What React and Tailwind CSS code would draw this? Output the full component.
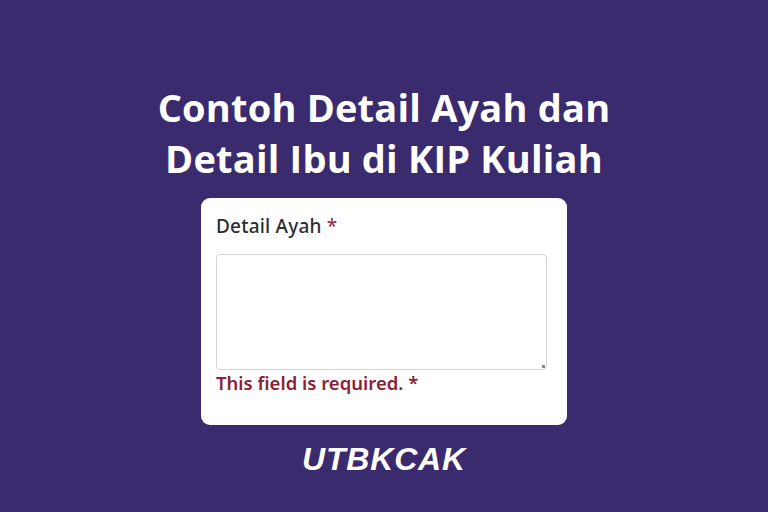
export default function App() {
  return (
    <div className="w-[768px] h-[512px] bg-[#3a2a6e] flex flex-col items-center pt-[82px] font-['Open_Sans',sans-serif]">
      <h1 className="text-white text-[38px] leading-[51px] font-bold text-center tracking-[0.2px]">
        Contoh Detail Ayah dan
        <br />
        Detail Ibu di KIP Kuliah
      </h1>
      <div className="mt-[14px] w-[366px] h-[227px] bg-white rounded-[9px] px-[15px] pt-[16px]">
        <p className="text-[19px] leading-[25px] font-medium text-[#2d2d2d] font-['Noto_Sans',sans-serif] tracking-[0.2px]">
          Detail Ayah <span className="text-[#a03050]">*</span>
        </p>
        <div className="mt-[15px] w-[331px] h-[116px] border border-[#d4d4d4] rounded-[4px] relative">
          <span className="absolute right-[1px] bottom-[1px] w-[3px] h-[3px] bg-[#888]" />
        </div>
        <p className="mt-[1px] text-[18.5px] leading-[24px] font-semibold text-[#8a2236] font-['Noto_Sans',sans-serif]">
          This field is required. *
        </p>
      </div>
      <div className="mt-[14px] text-white text-[32px] leading-[40px] font-bold italic font-['Liberation_Sans',sans-serif] tracking-[0.8px]">
        UTBKCAK
      </div>
    </div>
  );
}
